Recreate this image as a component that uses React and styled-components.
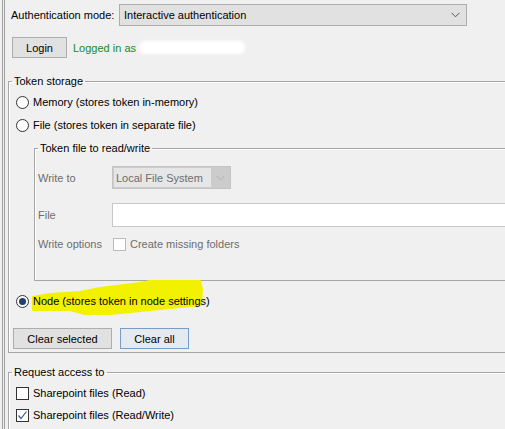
import React from 'react';
import styled, { createGlobalStyle } from 'styled-components';

const GlobalStyle = createGlobalStyle`
  html, body {
    margin: 0;
    padding: 0;
    background: #f0f0f0;
  }
  body {
    font-family: "Liberation Sans", Arial, sans-serif;
    font-size: 11px;
    color: #000;
  }
`;

const Window = styled.div`
  width: 505px;
  height: 429px;
  overflow: hidden;
  background: #f0f0f0;
  padding-left: 2px;
  box-sizing: border-box;
`;

const Panel = styled.div`
  border-left: 3px double #a0a0a0;
  min-height: 100%;
  padding-top: 4px;
  box-sizing: border-box;
`;

const Row = styled.div`
  display: flex;
  align-items: center;
  height: ${(p) => p.h || 22}px;
  padding-left: ${(p) => p.pl || 0}px;
  margin-top: ${(p) => p.mt || 0}px;
  position: relative;
  white-space: nowrap;
`;

const FieldLabel = styled.span`
  width: ${(p) => p.w}px;
  flex: none;
  color: ${(p) => (p.disabled ? '#6d6d6d' : '#000')};
`;

const Select = styled.div`
  width: 336px;
  height: 20px;
  border: 1px solid #adadad;
  background: #e1e1e1;
  display: flex;
  align-items: center;
  justify-content: space-between;
  padding: 0 6px 0 4px;
`;

const Button = styled.button`
  font-family: inherit;
  font-size: 11px;
  height: 21px;
  width: ${(p) => p.w}px;
  padding: 0;
  margin-right: ${(p) => p.mr ?? 8}px;
  border: 1px solid ${(p) => (p.focus ? '#7a9cc8' : '#adadad')};
  background: ${(p) => (p.focus ? '#e5eaf1' : '#e1e1e1')};
  color: #000;
`;

const Status = styled.span`
  color: #1a8a1a;
  display: flex;
  align-items: center;
`;

const Redacted = styled.span`
  display: inline-block;
  width: 106px;
  height: 13px;
  margin-left: 3px;
  background: #fff;
  border-radius: 6px;
  filter: blur(1.5px);
`;

const Group = styled.fieldset`
  margin: ${(p) => p.mt || 0}px -30px 0 ${(p) => p.ml || 0}px;
  padding: 0 0 ${(p) => p.pb || 0}px 0;
  border: 1px solid #a6a6a6;
  box-shadow: inset 1px 1px 0 #fff;
  min-width: 0;
`;

const Legend = styled.legend`
  line-height: 14px;
  padding: 0 2px;
  margin-left: 3px;
  color: #000;
`;

const Radio = styled.span`
  width: 11px;
  height: 11px;
  border-radius: 50%;
  border: 1px solid #333;
  background: #fff;
  margin-right: 4px;
  flex: none;
  display: flex;
  align-items: center;
  justify-content: center;
  position: relative;

  &::after {
    content: '';
    display: ${(p) => (p.checked ? 'block' : 'none')};
    width: 7px;
    height: 7px;
    border-radius: 50%;
    background: #1f3f6e;
  }
`;

const Box = styled.span`
  width: 11px;
  height: 11px;
  border: 1px solid ${(p) => (p.disabled ? '#bcbcbc' : '#333')};
  background: #fff;
  margin-right: 4px;
  flex: none;
  display: flex;
  align-items: center;
  justify-content: center;
`;

const OptionText = styled.span`
  color: ${(p) => (p.disabled ? '#6d6d6d' : '#000')};
  position: relative;
`;

const DisabledCombo = styled.div`
  width: 115px;
  height: 19px;
  border: 1px solid #c4c4c4;
  background: #cccccc;
  padding: 1px;
  display: flex;
  color: #6d6d6d;
`;

const ComboText = styled.div`
  flex: 1;
  background: #e6e6e6;
  display: flex;
  align-items: center;
  padding-left: 2px;
`;

const ComboArrow = styled.div`
  width: 18px;
  display: flex;
  align-items: center;
  justify-content: center;
`;

const TextInput = styled.div`
  flex: 1;
  height: 22px;
  border: 1px solid #c8c8c8;
  background: #fff;
`;

const Highlight = styled.svg`
  position: absolute;
  left: 21px;
  top: -10px;
  width: 175px;
  height: 36px;
`;

const Chevron = ({ color }) => (
  <svg width="9" height="6" viewBox="0 0 9 6">
    <path d="M0.5 0.8 L4.5 4.8 L8.5 0.8" fill="none" stroke={color} strokeWidth="1" />
  </svg>
);

const Check = () => (
  <svg width="11" height="11" viewBox="0 0 11 11">
    <path d="M1.5 5.5 L4 8.5 L9.5 1.5" fill="none" stroke="#3b5b85" strokeWidth="1.2" />
  </svg>
);

export default function App() {
  return (
    <Window>
      <GlobalStyle />
      <Panel>
        <Row pl={6} h={22}>
          <FieldLabel w={108}>Authentication mode:</FieldLabel>
          <Select>
            <span>Interactive authentication</span>
            <Chevron color="#555" />
          </Select>
        </Row>

        <Row pl={7} h={21} mt={11}>
          <Button w={55} mr={6}>Login</Button>
          <Status>
            Logged in as
            <Redacted />
          </Status>
        </Row>

        <Group ml={3} mt={16} pb={3}>
          <Legend>Token storage</Legend>
          <Row pl={7} mt={3}>
            <Radio />
            <OptionText>Memory (stores token in-memory)</OptionText>
          </Row>
          <Row pl={7} mt={1}>
            <Radio />
            <OptionText>File (stores token in separate file)</OptionText>
          </Row>

          <Group ml={25} mt={5} pb={29}>
            <Legend>Token file to read/write</Legend>
            <Row pl={3} h={23} mt={11}>
              <FieldLabel w={74} disabled>Write to</FieldLabel>
              <DisabledCombo>
                <ComboText>Local File System</ComboText>
                <ComboArrow>
                  <Chevron color="#b0b0b0" />
                </ComboArrow>
              </DisabledCombo>
            </Row>
            <Row pl={3} h={24} mt={14}>
              <FieldLabel w={74} disabled>File</FieldLabel>
              <TextInput />
            </Row>
            <Row pl={3} h={14} mt={10}>
              <FieldLabel w={75} disabled>Write options</FieldLabel>
              <Box disabled />
              <OptionText disabled>Create missing folders</OptionText>
            </Row>
          </Group>

          <Row pl={7} mt={9}>
            <Highlight viewBox="0 0 175 36">
              <path
                d="M3 17 L20 14 L50 12 L70 8 L110 3 L120 1 L170 1 L172 9 L171 25 L150 27 L120 30 L80 34 L55 34 L40 30 L3 30 Z"
                fill="#f2f200"
                stroke="#f2f200"
                strokeLinejoin="round"
                strokeWidth="2"
              />
            </Highlight>
            <Radio checked />
            <OptionText>Node (stores token in node settings)</OptionText>
          </Row>

          <Row pl={4} h={21} mt={16}>
            <Button w={99}>Clear selected</Button>
            <Button w={69} focus>Clear all</Button>
          </Row>
        </Group>

        <Group ml={3} mt={12} pb={6}>
          <Legend>Request access to</Legend>
          <Row pl={7} mt={3}>
            <Box />
            <OptionText>Sharepoint files (Read)</OptionText>
          </Row>
          <Row pl={7}>
            <Box>
              <Check />
            </Box>
            <OptionText>Sharepoint files (Read/Write)</OptionText>
          </Row>
        </Group>
      </Panel>
    </Window>
  );
}
